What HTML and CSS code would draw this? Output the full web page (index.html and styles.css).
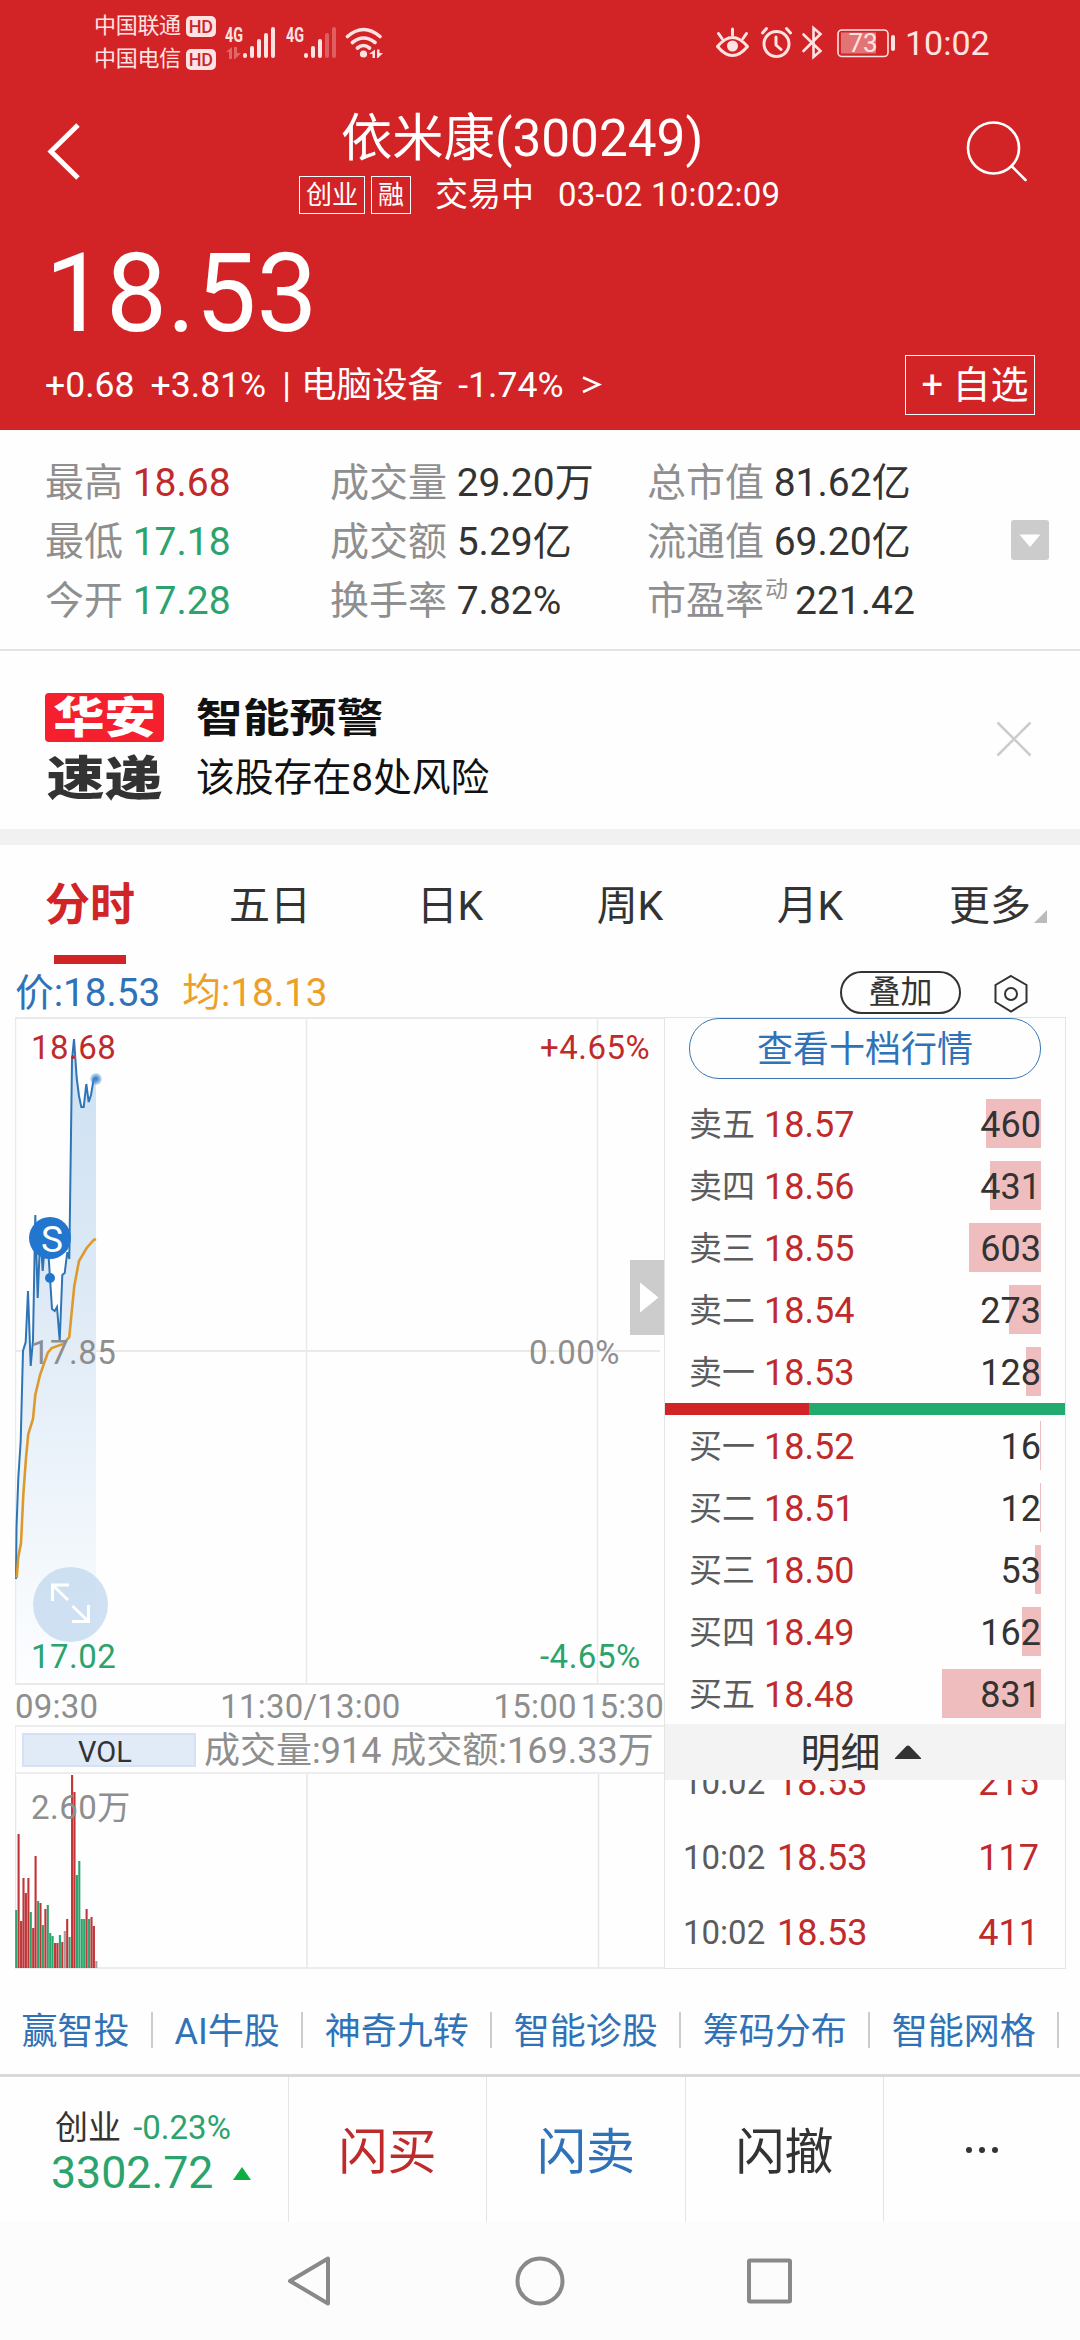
FILE: index.html
```html
<!DOCTYPE html>
<html lang="zh-CN">
<head>
<meta charset="utf-8">
<title>依米康(300249)</title>
<link rel="stylesheet" href="styles.css">
</head>
<body>
<header class="top">
  <div class="status">
    <div class="carriers">
      <div class="carrier">中国联通<b class="hd">HD</b></div>
      <div class="carrier">中国电信<b class="hd">HD</b></div>
    </div>
    <svg class="signals" width="160" height="36" viewBox="224 25 160 36" fill="#ffe3e3">
      <text class="net" x="225" y="41.500" textLength="18" lengthAdjust="spacingAndGlyphs">4G</text>
      <g opacity=".35"><path d="M226 52l6-5v12h-3v-7zM234 47h3v6h4l-6 6h-1z"/></g>
      <rect x="243" y="53" width="4" height="5" rx="2"/><rect x="250" y="46" width="4" height="12" rx="2"/><rect x="257" y="39" width="4" height="19" rx="2"/><rect x="264" y="33" width="4" height="25" rx="2"/><rect x="271" y="27" width="4" height="31" rx="2"/>
      <text class="net" x="286" y="41.500" textLength="18" lengthAdjust="spacingAndGlyphs">4G</text>
      <rect x="304" y="53" width="4" height="5" rx="2"/><rect x="311" y="46" width="4" height="12" rx="2"/><rect x="318" y="39" width="4" height="19" rx="2"/>
      <g opacity=".3"><rect x="325" y="33" width="4" height="25" rx="2"/><rect x="332" y="27" width="4" height="31" rx="2"/></g>
      <g fill="none" stroke="#ffe3e3" stroke-width="3.600" stroke-linecap="round"><path d="M347.500 36.500q16-14 32.500 0M352.500 42.500q11-9 22.500 0M357.500 48q6-5 12 0"/></g>
      <circle cx="363.500" cy="54" r="3.600"/><path d="M369 54l6-4.500v8.500h-2.500v-4zM377 49.500h2.500v3.500h3.500l-5 5h-1z"/>
    </svg>
    <svg class="devices" width="182" height="36" viewBox="714 25 182 36" fill="none" stroke="#ffe3e3" stroke-width="3" stroke-linecap="round" stroke-linejoin="round">
      <path d="M717.500 46.500q15-18 30 0q-15 18-30 0zM732.500 29v6M718.500 33.500l3.500 5M746.500 33.500l-3.500 5"/><circle cx="732.500" cy="46" r="5.500" fill="#ffe3e3" stroke="none"/>
      <circle cx="776.500" cy="44" r="12.500"/><path d="M776 37v8l5 4.500M762.500 33l4-4.500M790.500 33l-4-4.500"/>
      <path d="M803.500 34.500l17 16.500-7 6V28l7 6-17 17" stroke-width="2.600" stroke-linejoin="miter"/>
      <rect x="838" y="30" width="50" height="26.500" rx="4" stroke-width="1.600"/><rect x="841" y="32.500" width="35" height="21" fill="#e37476" stroke="none"/><rect x="891" y="35" width="4" height="16" rx="2" fill="#ffe3e3" stroke="none"/>
      <text class="level" x="848.500" y="51.500">73</text>
    </svg>
    <span class="clock">10:02</span>
  </div>
  <div class="titlebar">
    <svg class="back" width="40" height="64" viewBox="44 120 40 64"><path d="M78 125L51 151.500L78 178" fill="none" stroke="#fff" stroke-width="5"/></svg>
    <div class="heading">
      <h1>依米康(300249)</h1>
      <div class="sub"><span class="tag">创业</span><span class="tag">融</span><span class="state">交易中</span><span class="date">03-02 10:02:09</span></div>
    </div>
    <svg class="search" width="64" height="64" viewBox="964 120 64 64"><g fill="none" stroke="#fff" stroke-width="2.600" stroke-linecap="round"><circle cx="993.500" cy="148" r="25.500"/><path d="M1011.500 166l14 14"/></g></svg>
  </div>
  <div class="price">18.53</div>
  <div class="change"><span>+0.68</span><span>+3.81%</span><span class="bar">|</span><span class="sector">电脑设备</span><span>-1.74%</span><svg class="more" width="20" height="22" viewBox="0 0 20 22"><path d="M1 3.500L17 10.500L1 18" fill="none" stroke="#fff" stroke-width="2.600"/></svg><button class="add">+ 自选</button></div>
</header>

<section class="stats">
  <div><i>最高</i> <span class="up">18.68</span></div><div><i>成交量</i> 29.20万</div><div><i>总市值</i> 81.62亿</div>
  <div><i>最低</i> <span class="down">17.18</span></div><div><i>成交额</i> 5.29亿</div><div><i>流通值</i> 69.20亿</div>
  <div><i>今开</i> <span class="down">17.28</span></div><div><i>换手率</i> 7.82%</div><div><i>市盈率</i><sup>动</sup>221.42</div>
  <svg class="expand" width="38" height="40"><rect width="38" height="40" rx="3" fill="#ccc"/><path d="M8.500 14.500h21L19 27z" fill="#fff"/></svg>
</section>

<section class="alert">
  <div class="logo"><div class="logo-top"><b>华安</b></div><div class="logo-bottom"><b>速递</b></div></div>
  <div class="message"><h2>智能预警</h2><p>该股存在8处风险</p></div>
  <svg class="close" width="36" height="36"><path d="M1.500 1.500l33 33M34.500 1.500l-33 33" stroke="#ccc" stroke-width="2.600"/></svg>
</section>

<nav class="tabs">
  <span class="active">分时</span><span>五日</span><span>日K</span><span>周K</span><span>月K</span><span>更多<svg class="corner" width="13" height="13"><path d="M13 0v13H0z" fill="#bbb"/></svg></span>
</nav>
<div class="quote-line">
  <span class="last">价:18.53</span><span class="avg">均:18.13</span>
  <button class="overlay">叠加</button>
  <svg class="settings" width="36" height="42" viewBox="993 971 36 42"><g fill="none" stroke="#333" stroke-width="2"><path d="M1011 975l15.500 9v17l-15.500 9.500l-15.500-9.500v-17z"/><circle cx="1011" cy="993" r="6"/></g></svg>
</div>

<main class="market">
  <div class="charts">
    <svg class="minute" width="649" height="668" viewBox="15 1017 649 668">
      <defs>
        <linearGradient id="area" gradientUnits="userSpaceOnUse" x1="0" y1="1040" x2="0" y2="1684"><stop offset="0" stop-color="#cde0f2"/><stop offset=".4" stop-color="#deeaf6"/><stop offset="1" stop-color="#fdfeff"/></linearGradient>
        <radialGradient id="glow"><stop offset=".2" stop-color="#3f86cc"/><stop offset="1" stop-color="#3f86cc" stop-opacity=".2"/></radialGradient>
      </defs>
      <path d="M16 1579L18.300 1478L20.700 1441L23 1351L25.700 1342L28 1291L30.700 1366L33 1340L35.300 1215L37.700 1298L40.300 1234L42.700 1271L45.300 1238L47.700 1242L50 1278L52 1309L54.700 1311L57 1307L59.700 1341L62.300 1275L64.700 1273L67.300 1252L69.300 1259L71 1134L72 1060L74 1039L76.700 1078L79 1096L81.300 1107H83.700L86.300 1084L88.700 1102L91 1095L93.700 1079L96 1078V1684H16z" fill="url(#area)"/>
      <g fill="none" stroke="#eaeaea" stroke-width="2"><path d="M15 1018H664M15 1351H660M15 1684H664"/><path d="M15.500 1018V1684M306.500 1018V1684M597.500 1018V1684" stroke-width="1.500"/></g>
      <path d="M16 1579L16.500 1528L18.300 1478L20.700 1441L23 1351L25.700 1342L28 1291L30.700 1366L33 1340L35.300 1215L37.700 1298L40.300 1234L42.700 1271L45.300 1238L47.700 1242L50 1278L52 1309L54.700 1311L57 1307L59.700 1341L62.300 1275L64.700 1273L67.300 1252L69.300 1259L71 1134L72 1060L74 1039L76.700 1078L79 1096L81.300 1107H83.700L86.300 1084L88.700 1102L91 1095L93.700 1079L96 1078" fill="none" stroke="#2f74b5" stroke-width="2"/>
      <path d="M16.700 1578L18.300 1557L21 1543L23.300 1495L26 1458L28.300 1434L33 1419L35.300 1395L40 1375L47.700 1353L51.700 1348L63.300 1344L69.300 1337L71.700 1312L74.300 1286L79 1261L86.700 1248L93.700 1240L96 1239" fill="none" stroke="#dc9a2e" stroke-width="2.600"/>
      <circle cx="96" cy="1079" r="6" fill="url(#glow)"/>
      <circle cx="50" cy="1238" r="21" fill="#2376cd"/><circle cx="50" cy="1278" r="5" fill="#2376cd"/>
      <text class="mark" x="52" y="1251.500">S</text>
      <circle cx="70.500" cy="1604.500" r="37.500" fill="#c5daef" fill-opacity=".82"/>
      <path d="M69 1585H52.500V1601M53 1585.500L68 1600M72 1621.500H88.500V1605M88 1621L72.500 1606" fill="none" stroke="#fff" stroke-width="3"/>
      <g class="axis"><text x="31" y="1059" class="up">18.68</text><text x="31" y="1364">17.85</text><text x="31" y="1668" class="down">17.02</text>
      <text x="540" y="1059" class="up">+4.65%</text><text x="529" y="1364">0.00%</text><text x="540" y="1668" class="down">-4.65%</text></g>
      <path d="M630 1260h34v75h-34z" fill="#ccc"/><path d="M640 1282.500l18.500 15-18.500 15z" fill="#fff"/>
    </svg>
    <div class="times"><span>09:30</span><span>11:30/13:00</span><span class="close-times">15:00<span>15:30</span></span></div>
    <div class="vol-head"><span class="vol">VOL</span><span class="turnover">成交量:914 成交额:169.33万</span></div>
    <svg class="volume" width="649" height="195" viewBox="15 1774 649 195">
      <path d="M15.500 1774V1968H664M307 1774V1968M598.500 1774V1968" fill="none" stroke="#e6e6e6" stroke-width="1.500"/>
      <g stroke-width="2.100" fill="none">
        <path stroke="#2aa56e" d="M16.200 1968v-58M30.800 1968v-56M38.100 1968v-67M42.900 1968v-43M47.800 1968v-63M50.200 1968v-35M52.600 1968v-32M59.900 1968v-33M69.600 1968v-31M76.900 1968v-93M79.300 1968v-107M81.800 1968v-49M84.200 1968v-49M89.100 1968v-49"/>
        <path stroke="#c03538" d="M18.600 1968v-134M21.100 1968v-47M23.500 1968v-90M25.900 1968v-75M28.400 1968v-90M33.200 1968v-40M35.600 1968v-112M40.500 1968v-65M45.400 1968v-59M55.100 1968v-25M57.500 1968v-25M62.300 1968v-26M67.200 1968v-49M72.100 1968v-193M74.500 1968v-176M86.600 1968v-59M91.500 1968v-51M93.900 1968v-42"/>
        <path stroke="#a99" d="M64.800 1968v-37M96.300 1968v-7"/>
      </g>
      <g class="axis"><text x="31" y="1819">2.60万</text></g>
    </svg>
  </div>

  <aside class="book">
    <button class="levels">查看十档行情</button>
    <div class="side sells">
      <div class="level-row"><i>卖五</i><em>18.57</em><span class="qty"><s style="width:55px"></s><b>460</b></span></div>
      <div class="level-row"><i>卖四</i><em>18.56</em><span class="qty"><s style="width:51px"></s><b>431</b></span></div>
      <div class="level-row"><i>卖三</i><em>18.55</em><span class="qty"><s style="width:72px"></s><b>603</b></span></div>
      <div class="level-row"><i>卖二</i><em>18.54</em><span class="qty"><s style="width:32px"></s><b>273</b></span></div>
      <div class="level-row"><i>卖一</i><em>18.53</em><span class="qty"><s style="width:15px"></s><b>128</b></span></div>
    </div>
    <div class="ratio"><span style="width:36%"></span></div>
    <div class="side buys">
      <div class="level-row"><i>买一</i><em>18.52</em><span class="qty"><s style="width:1px"></s><b>16</b></span></div>
      <div class="level-row"><i>买二</i><em>18.51</em><span class="qty"><s style="width:1px"></s><b>12</b></span></div>
      <div class="level-row"><i>买三</i><em>18.50</em><span class="qty"><s style="width:6px"></s><b>53</b></span></div>
      <div class="level-row"><i>买四</i><em>18.49</em><span class="qty"><s style="width:19px"></s><b>162</b></span></div>
      <div class="level-row"><i>买五</i><em>18.48</em><span class="qty"><s style="width:99px"></s><b>831</b></span></div>
    </div>
    <div class="detail"><span>明细</span><svg width="26" height="15"><path d="M0 13L11.500 1q1.500-1 3 0L26 13v1H0z" fill="#333"/></svg></div>
    <div class="trades">
      <div class="trade"><i>10:02</i><em>18.53</em><b>215</b></div>
      <div class="trade"><i>10:02</i><em>18.53</em><b>117</b></div>
      <div class="trade"><i>10:02</i><em>18.53</em><b>411</b></div>
    </div>
  </aside>
</main>

<nav class="links"><a>赢智投</a><a>AI牛股</a><a>神奇九转</a><a>智能诊股</a><a>筹码分布</a><a>智能网格</a></nav>

<footer class="actions">
  <div class="index"><div class="index-name">创业 <span>-0.23%</span></div><div class="index-value">3302.72<svg width="18" height="13"><path d="M9 0l9 13H0z" fill="#0eae44"/></svg></div></div>
  <div class="action buy">闪买</div><div class="action sell">闪卖</div><div class="action">闪撤</div>
  <div class="action dots"><svg width="34" height="8" fill="#333"><circle cx="4" cy="4" r="3"/><circle cx="17" cy="4" r="3"/><circle cx="30" cy="4" r="3"/></svg></div>
</footer>
<div class="system">
  <svg width="520" height="56" viewBox="280 2253 520 56" fill="none" stroke="#898989" stroke-width="4" stroke-linejoin="round"><path d="M328 2258.500V2303.500L290 2281z"/><circle cx="540" cy="2281" r="22.500"/><rect x="749" y="2260.500" width="41" height="41" rx="1"/></svg>
</div>
</body>
</html>
```

FILE: styles.css
```css
* { box-sizing: border-box; }
body {
  margin: 0;
  width: 1080px;
  height: 2340px;
  overflow: hidden;
  background: #fefefe;
  color: #333;
  font-family: Roboto, "Noto Sans CJK SC", sans-serif;
  line-height: 1.2;
}
svg { display: block; flex: none; }
i, em { font-style: normal; }
h1, h2, p { margin: 0; font-weight: 400; }
button { padding: 0; background: none; font: inherit; color: inherit; }
.up { color: #bf2b2c; fill: #bf2b2c; }
.down { color: #2ba36c; fill: #2ba36c; }

.top { height: 430px; background: #d22426; color: #fff; }
.status { display: flex; height: 86px; padding-left: 94px; color: #ffe3e3; }
.carriers { width: 130px; padding-top: 10px; }
.carrier { display: flex; align-items: center; gap: 5px; height: 33px; font-size: 22px; letter-spacing: -.3px; }
.hd { width: 30px; height: 21px; border-radius: 5px; background: #ffe3e3; color: #c5292b; font-size: 18px; line-height: 21px; text-align: center; font-weight: 500; }
.signals { margin-top: 25px; }
.net { font-size: 20px; font-weight: 700; }
.devices { margin: 25px 0 0 330px; }
.level { font-size: 26px; fill: #ffe3e3; stroke: none; }
.clock { margin-left: 9px; padding-top: 23px; font-size: 34px; line-height: 40px; }
.titlebar { display: flex; height: 136px; padding: 22px 52px 0 44px; }
.back, .search { margin-top: 12px; }
.heading { flex: 1; }
h1 { margin-left: 257px; font-size: 51.300px; line-height: 62px; white-space: nowrap; }
.sub { display: flex; align-items: center; height: 50px; margin-left: 215px; font-size: 33px; white-space: nowrap; }
.tag { height: 38px; margin-right: 6px; padding: 0 6px; border: 1.500px solid #fff; font-size: 26px; line-height: 37px; }
.state { margin: 0 24px 0 18px; }
.date { letter-spacing: .25px; }
.price { height: 128px; padding-left: 45px; font-size: 108.500px; line-height: 144px; }
.change { display: flex; align-items: center; height: 70px; padding: 0 45px; font-size: 35.600px; }
.change span { margin-right: 16px; }
.change .bar { margin-right: 10px; }
.change .sector { margin-right: 15px; }
.more { margin-left: 3px; }
.add { width: 130px; height: 60px; margin-left: auto; padding-left: 10px; border: 1.500px solid #fff; font-size: 38px; line-height: 58px; text-align: center; white-space: nowrap; }

.stats { position: relative; display: grid; grid-template-columns: 285px 317px 1fr; grid-auto-rows: 59px; height: 221px; padding: 23px 0 0 45px; border-bottom: 2px solid #e4e4e4; font-size: 39px; line-height: 60px; white-space: nowrap; }
.stats i { color: #8f8f8f; }
sup { margin: 0 7px 0 1px; color: #8f8f8f; font-size: 23px; line-height: 1; vertical-align: 17px; }
.expand { position: absolute; right: 31px; top: 90px; }

.alert { display: flex; height: 178px; padding: 42px 48px 0 45px; }
.logo { display: grid; grid-template-rows: 49px 64px; width: 119px; text-align: center; white-space: nowrap; }
.logo b { display: block; font-weight: 900; }
.logo-top { border-radius: 4px; background: #f51f2e; color: #fff; }
.logo-top b { font-size: 43px; line-height: 50px; transform: scaleX(1.19); }
.logo-bottom b { font-size: 47px; line-height: 73px; color: #333; transform: scaleX(1.23); }
.message { flex: 1; padding-left: 32px; color: #111; }
h2 { font-size: 46.800px; font-weight: 700; line-height: 50px; transform: scaleY(.85); }
p { padding-top: 5px; font-size: 38.800px; line-height: 60px; }
.close { margin-top: 28px; }

.tabs { display: grid; grid-template-columns: repeat(6, 180px); height: 135px; border-top: 16px solid #f1f1f1; font-size: 41px; line-height: 122px; text-align: center; }
.tabs span { position: relative; }
.tabs .active { color: #d12426; font-size: 45px; font-weight: 700; }
.active::after { content: ""; position: absolute; left: 54px; bottom: 3px; width: 72px; height: 9px; background: #d12426; }
.corner { position: absolute; right: 33px; bottom: 44px; }
.quote-line { display: flex; align-items: center; height: 53px; padding: 4px 51px 0 15px; font-size: 38.700px; }
.last { color: #2f72b8; }
.avg { margin-left: 22px; color: #eba028; }
.last, .avg { height: 45px; }
.overlay { width: 121px; height: 43px; margin-left: auto; border: 2.500px solid #333; border-radius: 22px; font-size: 32px; line-height: 39px; }
.settings { margin-left: 32px; }

.market { display: grid; grid-template-columns: 649px 402px; padding-left: 15px; height: 952px; }
.axis { font-size: 33px; letter-spacing: .5px; fill: #8e8e8e; }
.mark { font-size: 37px; fill: #fff; text-anchor: middle; }
.times { display: flex; justify-content: space-between; height: 42px; border-bottom: 2px solid #ededed; color: #8e8e8e; font-size: 33px; line-height: 43px; letter-spacing: .2px; }
.close-times span { margin-left: 4px; }
.times > span:nth-child(2) { margin-left: 29px; }
.vol-head { display: flex; align-items: center; gap: 8px; height: 47px; padding-left: 6px; border-bottom: 2px solid #ededed; border-left: 1px solid #ededed; color: #8e8e8e; font-size: 36px; white-space: nowrap; }
.vol { width: 174px; height: 34px; border: 2px solid #d6e2f3; background: #e1ebf8; color: #333; font-size: 29px; line-height: 34px; text-align: center; padding-right: 8px; }
.turnover { padding-top: 5px; }
.book { display: flex; flex-direction: column; height: 952px; border: 1.500px solid #e4e4e4; border-top-width: 1px; }
.levels { flex: none; width: 352px; height: 61px; margin-left: 24px; border: 1.500px solid #3a76b5; border-radius: 30px; color: #2f72b8; font-size: 36px; line-height: 62px; }
.side { flex: none; display: grid; grid-auto-rows: 62px; padding: 0 24px; font-size: 36px; }
.sells { padding-top: 13px; margin-bottom: 1px; }
.level-row { display: grid; grid-template-columns: 75px 120px 1fr; align-items: center; }
.level-row i { padding-top: 4px; color: #5c5c5c; font-size: 33px; }
.level-row em { padding-top: 5px; color: #bf2b2c; }
.qty { position: relative; height: 49px; line-height: 53px; text-align: right; }
.qty s { position: absolute; right: 0; top: 0; height: 49px; background: #f0bdbf; }
.qty b { position: relative; font-weight: 400; }
.ratio { flex: none; height: 12px; background: #23aa6e; }
.ratio span { display: block; height: 12px; background: #d12426; }
.buys { margin-top: -1px; }
.detail { flex: none; display: flex; align-items: center; justify-content: center; gap: 14px; height: 56px; background: #f3f3f3; font-size: 40px; padding-right: 9px; }
.detail span { padding-top: 4px; }
.trades { flex: 1; display: flex; flex-direction: column; justify-content: flex-end; min-height: 0; overflow: hidden; }
.trade { flex: none; display: grid; grid-template-columns: 94px 1fr auto; align-items: center; height: 75px; padding: 0 26px 0 18px; font-size: 36px; }
.trade i { padding-top: 4px; color: #5c5c5c; font-size: 33px; }
.trade em, .trade b { padding-top: 6px; color: #bf2b2c; font-weight: 400; }

.links { display: flex; height: 105px; padding: 43px 0 0; white-space: nowrap; overflow: hidden; }
.links a { flex: none; height: 36px; padding: 0 21.500px; border-right: 2px solid #ccc; color: #2f72b8; font-size: 36px; line-height: 40px; }
.actions { display: grid; grid-template-columns: 289px 198px 199px 198px 1fr; height: 148px; border-top: 3px solid #d9d9d9; }
.actions > div { border-right: 1.500px solid #e4e4e4; }
.actions > div:last-child { border-right: 0; }
.index { padding: 30px 0 0 51px; color: #2ba36c; white-space: nowrap; }
.index-name { padding-left: 4px; color: #333; font-size: 33px; line-height: 41px; }
.index-name span { margin-left: 4px; color: #2ba36c; }
.index-value { display: flex; align-items: center; gap: 20px; font-size: 44.700px; line-height: 51px; }
.action { display: flex; align-items: center; justify-content: center; padding-top: 7px; font-size: 49px; }
.action.dots { padding-top: 0; }
.buy { color: #bf2b2c; }
.sell { color: #2f72b8; }
.system { height: 118px; padding: 31px 0 0 280px; background: #fcfcfc; }
```
